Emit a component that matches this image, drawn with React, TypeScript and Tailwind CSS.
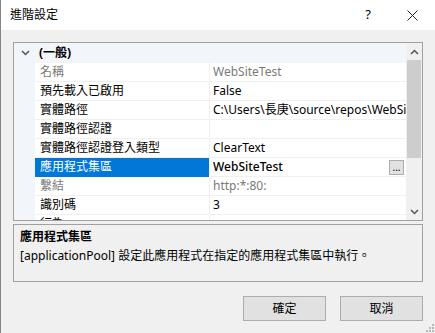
const font = { fontFamily: '"Noto Sans", "Noto Sans CJK TC", sans-serif' };

type Row = { name: string; value: string; muted?: boolean; selected?: boolean };

const rows: Row[] = [
  { name: "名稱", value: "WebSiteTest", muted: true },
  { name: "預先載入已啟用", value: "False" },
  { name: "實體路徑", value: "C:\\Users\\長庚\\source\\repos\\WebSiteTest" },
  { name: "實體路徑認證", value: "" },
  { name: "實體路徑認證登入類型", value: "ClearText" },
  { name: "應用程式集區", value: "WebSiteTest", selected: true },
  { name: "繫結", value: "http:*:80:", muted: true },
  { name: "識別碼", value: "3" },
  { name: "行為", value: "" },
];

const Chevron = ({ up = false }: { up?: boolean }) => (
  <svg width="9" height="6" viewBox="0 0 9 6" className={up ? "rotate-180" : ""}>
    <path d="M1 1 L4.5 4.5 L8 1" fill="none" stroke="#555" strokeWidth="1.5" />
  </svg>
);

export default function App() {
  return (
    <div className="relative w-[435px] h-[333px] bg-[#f0f0f0] border-l border-[#858585] flex flex-col text-[12px] text-black overflow-hidden" style={font}>
      {/* 標題列 */}
      <div className="h-[30px] bg-white flex items-center pl-[9px] shrink-0">
        <span className="text-[12px]">進階設定</span>
        <span className="ml-auto mr-[36px] text-[13px]">?</span>
        <svg width="11" height="11" viewBox="0 0 11 11" className="mr-[17px]">
          <path d="M0.5 0.5 L10.5 10.5 M10.5 0.5 L0.5 10.5" stroke="#222" strokeWidth="1" />
        </svg>
      </div>

      <div className="flex flex-col px-[12px] pt-[12px]">
        {/* 屬性表 */}
        <div className="h-[179px] border border-[#a0a0a0] bg-white flex overflow-hidden">
          <div className="flex-1 flex flex-col overflow-hidden">
            <div className="h-[20px] shrink-0 bg-[#f2f5fa] flex items-center">
              <div className="w-[21px] flex justify-center pl-[2px]">
                <Chevron />
              </div>
              <span className="font-bold ml-[4px]">(一般)</span>
            </div>
            {rows.map((r) => (
              <div key={r.name} className="h-[19px] shrink-0 flex">
                <div className="w-[21px] bg-[#f2f5fa] shrink-0" />
                <div
                  className={`w-[174px] shrink-0 pl-[5px] flex items-center whitespace-nowrap border-b ${
                    r.selected ? "bg-[#0078d7] text-white border-[#0078d7]" : "border-[#f0f0f0]"
                  } ${r.muted ? "text-[#7a7a7a]" : ""}`}
                >
                  {r.name}
                </div>
                <div className="w-px bg-[#f0f0f0] shrink-0" />
                <div
                  className={`flex-1 pl-[3px] flex items-center whitespace-nowrap overflow-hidden border-b border-[#f0f0f0] ${
                    r.muted ? "text-[#7a7a7a]" : ""
                  } ${r.selected ? "font-medium" : ""}`}
                >
                  <span className="flex-1 overflow-hidden">{r.value}</span>
                  {r.selected && (
                    <span className="w-[15px] h-[15px] mr-[2px] bg-[#e1e1e1] border border-[#adadad] flex items-end justify-center text-[10px] leading-[10px] font-normal pb-[2px]">
                      ...
                    </span>
                  )}
                </div>
              </div>
            ))}
          </div>

          {/* 捲軸 */}
          <div className="w-[16px] bg-[#f0f0f0] flex flex-col items-center shrink-0">
            <div className="h-[17px] flex items-center justify-center pt-[1px]">
              <Chevron up />
            </div>
            <div className="w-[14px] h-[98px] bg-[#cdcdcd]" />
            <div className="flex-1" />
            <div className="h-[17px] flex items-center justify-center">
              <Chevron />
            </div>
          </div>
        </div>

        {/* 說明面板 */}
        <div className="mt-[3px] h-[58px] border border-[#a0a0a0] px-[6px] pt-[3px] flex flex-col gap-[1px]">
          <span className="font-bold">應用程式集區</span>
          <span>[applicationPool] 設定此應用程式在指定的應用程式集區中執行。</span>
        </div>

        {/* 按鈕 */}
        <div className="mt-[14px] flex justify-end gap-[14px]">
          <button className="w-[83px] h-[25px] bg-[#e1e1e1] border border-[#adadad] text-[12px]">確定</button>
          <button className="w-[83px] h-[25px] bg-[#e1e1e1] border border-[#adadad] text-[12px]">取消</button>
        </div>
      </div>

      {/* 調整大小握把 */}
      <svg width="8" height="8" viewBox="0 0 8 8" className="absolute right-[1px] bottom-[1px]">
        <rect x="6" y="0" width="2" height="2" fill="#b8b8b8" />
        <rect x="3" y="3" width="2" height="2" fill="#b8b8b8" />
        <rect x="6" y="3" width="2" height="2" fill="#b8b8b8" />
        <rect x="0" y="6" width="2" height="2" fill="#b8b8b8" />
        <rect x="3" y="6" width="2" height="2" fill="#b8b8b8" />
        <rect x="6" y="6" width="2" height="2" fill="#b8b8b8" />
      </svg>
    </div>
  );
}
